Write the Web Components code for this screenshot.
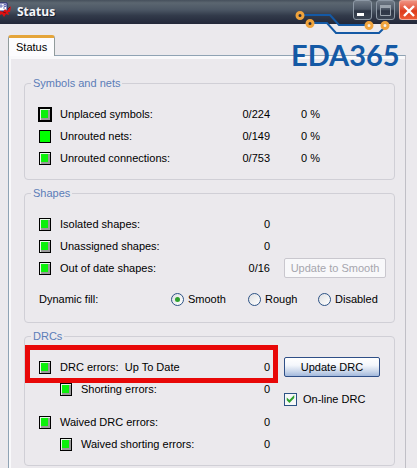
<!DOCTYPE html>
<html lang="en">
<head>
<meta charset="utf-8">
<meta name="viewport" content="width=device-width, initial-scale=1">
<title>Status</title>
<style>
  body {
    margin: 0;
    background: #ebe9ed;
    color: #000;
    font: 11px/14px "Liberation Sans", Arial, sans-serif;
  }
</style>
</head>
<body>
<status-window></status-window>

<script>
  class TitleBar extends HTMLElement {
    constructor() {
      super();
      this.attachShadow({ mode: 'open' });
    }

    connectedCallback() {
      this.shadowRoot.innerHTML = `
        <style>
          :host {
            display: flex;
            align-items: flex-start;
            height: 24px;
            background: linear-gradient(#46505c, #5b6670 12%, #4c5765 40%, #323a4a 65%, #222739);
          }
          .icon {
            width: 12px;
            height: 18px;
          }
          h1 {
            flex: 1;
            margin: 0;
            padding-left: 5px;
            color: #f4f5f8;
            font: bold 12px/24px "Open Sans", sans-serif;
            text-shadow: 1px 1px #1a2030;
          }
          .buttons {
            display: flex;
            gap: 4px;
          }
          button {
            box-sizing: border-box;
            width: 19px;
            height: 20px;
            padding: 0;
            border: 1px solid #8d98a5;
            border-radius: 3px;
            background: linear-gradient(#717b87, #4c5664 45%, #2e3646 55%, #3a4453);
          }
          button.close {
            width: 18px;
            border-color: #f0a898;
            border-right: 0;
            border-radius: 3px 0 0 3px;
            background: linear-gradient(#ef9080, #e4573c 45%, #dc3a1a 55%, #ee5a34);
          }
          button svg {
            display: block;
          }
        </style>
        <svg class="icon" viewBox="0 0 12 18" aria-hidden="true">
          <path d="M-1 3h8v8h-8z" fill="#fff" stroke="#23247c"/>
          <path d="M0 5h2v2H0zM4 4.500h2v2H4zM3 8h2" fill="none" stroke="#4a50a8" stroke-width=".8"/>
          <path d="M0 11l3 1 2-3 2 2 4-5-1 6-2 0 1 3-3-1-2 3-2-3-2 1z" fill="#e01010"/>
          <path d="M3 12l3 1M8 9l2-2" stroke="#7d0a14" fill="none"/>
        </svg>
        <h1><slot></slot></h1>
        <div class="buttons">
          <button type="button" aria-label="Minimize">
            <svg width="17" height="18"><path d="M3 12h7v3H3z" fill="#fff"/></svg>
          </button>
          <button type="button" aria-label="Maximize" disabled>
            <svg width="17" height="18"><path d="M3.500 5.500h10v9h-10z" fill="none" stroke="#9aa3ad"/><path d="M3 4h11v3H3z" fill="#9aa3ad"/></svg>
          </button>
          <button type="button" class="close" aria-label="Close">
            <svg width="17" height="18"><path d="M4 5l10 10M14 5l-10 10" stroke="#fff" stroke-width="2.4"/></svg>
          </button>
        </div>
      `;
    }
  }

  class BoardLogo extends HTMLElement {
    constructor() {
      super();
      this.attachShadow({ mode: 'open' });
    }

    connectedCallback() {
      this.shadowRoot.innerHTML = `
        <style>
          :host {
            display: block;
            width: 112px;
            color: #1459a5;
            pointer-events: none;
          }
          svg {
            display: block;
            margin-left: 4px;
          }
          .name {
            font: bold 29px/32px Lato, sans-serif;
            white-space: nowrap;
          }
        </style>
        <svg width="96" height="29" viewBox="0 0 96 29" aria-hidden="true">
          <g fill="none" stroke="#1459a5" stroke-width="2">
            <path d="M9 5h26l9 10h26"/>
            <path d="M19 13h13l9 10h43l6-6"/>
          </g>
          <g fill="#2b2d3a" stroke="#efa33c" stroke-width="3">
            <circle cx="5" cy="5.500" r="3"/>
            <circle cx="15" cy="13.500" r="3"/>
          </g>
          <g fill="#f3eee6" stroke="#efa33c" stroke-width="3">
            <circle cx="74" cy="15.500" r="3"/>
            <circle cx="90" cy="15.500" r="3"/>
          </g>
        </svg>
        <div class="name"><slot></slot></div>
      `;
    }
  }

  class TabPanel extends HTMLElement {
    constructor() {
      super();
      this.attachShadow({ mode: 'open' });
    }

    connectedCallback() {
      this.shadowRoot.innerHTML = `
        <style>
          :host {
            display: flex;
            flex-direction: column;
            align-items: flex-start;
          }
          button {
            position: relative;
            height: 21px;
            margin: 0 0 -1px;
            padding: 0 7px;
            border: 1px solid #919b9c;
            border-top: 3px solid #e5a53a;
            border-bottom: 0;
            border-radius: 3px 3px 0 0;
            background: #fcfcfe;
            color: inherit;
            font: inherit;
          }
          .page {
            flex: 1;
            align-self: stretch;
            box-sizing: border-box;
            padding: 20px 10px 0 15px;
            border: 1px solid #8fa3b4;
            border-right-color: #c0bfc6;
            border-bottom: 0;
            box-shadow: inset 2px 3px #f9f9fb;
          }
        </style>
        <button type="button" role="tab" id="tab" aria-selected="true">${this.getAttribute('label')}</button>
        <div class="page" role="tabpanel" aria-labelledby="tab"><slot></slot></div>
      `;
    }
  }

  class GroupBox extends HTMLElement {
    constructor() {
      super();
      this.attachShadow({ mode: 'open' });
    }

    connectedCallback() {
      this.shadowRoot.innerHTML = `
        <style>
          :host {
            display: block;
            margin-bottom: 6px;
          }
          fieldset {
            min-width: 0;
            margin: 0;
            padding: 13px 8px 10px 14px;
            border: 1px solid #d0cfd6;
            border-radius: 4px;
          }
          legend {
            margin-left: -8px;
            padding: 0 2px;
            color: #5b7db8;
          }
          .columns {
            display: grid;
            grid-template-columns: 1fr 102px;
            column-gap: 14px;
          }
        </style>
        <fieldset>
          <legend>${this.getAttribute('label')}</legend>
          <div class="columns">
            <div><slot></slot></div>
            <div><slot name="side"></slot></div>
          </div>
          <slot name="footer"></slot>
        </fieldset>
      `;
    }
  }

  class StatusRow extends HTMLElement {
    constructor() {
      super();
      this.attachShadow({ mode: 'open' });
    }

    connectedCallback() {
      this.shadowRoot.innerHTML = `
        <style>
          :host {
            display: grid;
            position: relative;
            grid-template-columns: 12px 1fr auto;
            column-gap: 9px;
            align-items: center;
            height: 22px;
          }
          :host([nested]) {
            padding-left: 21px;
          }
          :host([spaced]) {
            margin-top: 11px;
          }
          button {
            width: 12px;
            height: 13px;
            padding: 0;
            border: 1px solid #000;
            background: #0cf00c;
            box-shadow: inset 1px 1px #e8f8e8, inset -2px -2px #9a9a9a;
          }
          :host([flat]) button {
            background: #00ff00;
            box-shadow: none;
          }
          :host([focused]) button {
            outline: 1px solid #000;
          }
          label {
            white-space: pre;
          }
          /* red frame drawn over the row and its neighbours */
          :host([marked])::after {
            content: "";
            position: absolute;
            z-index: 1;
            inset: -11px -8px -5px -14px;
            border: 5px solid #e80808;
            pointer-events: none;
          }
        </style>
        <button type="button" id="swatch"></button>
        <label for="swatch"><slot></slot></label>
        <output for="swatch">${this.getAttribute('value')}</output>
      `;
    }
  }

  class PercentValue extends HTMLElement {
    constructor() {
      super();
      this.attachShadow({ mode: 'open' });
    }

    connectedCallback() {
      this.shadowRoot.innerHTML = `
        <style>
          :host {
            display: block;
            padding-left: 17px;
            line-height: 22px;
          }
        </style>
        <slot></slot>
      `;
    }
  }

  class PushButton extends HTMLElement {
    constructor() {
      super();
      this.attachShadow({ mode: 'open' });
    }

    connectedCallback() {
      const disabled = this.hasAttribute('disabled') ? 'disabled' : '';
      this.shadowRoot.innerHTML = `
        <style>
          :host {
            display: block;
          }
          :host([disabled]) {
            margin-top: 44px;
          }
          button {
            width: 96px;
            height: 20px;
            margin: 1px 0;
            padding: 0;
            border: 1px solid #2f4f87;
            border-radius: 2px;
            background: linear-gradient(#fff, #f4f7fc 40%, #c9d6ea 75%, #a3b9dc);
            color: #000;
            font: inherit;
            white-space: nowrap;
          }
          button:disabled {
            width: 100%;
            border-color: #c9c7ce;
            background: #f8f8fa;
            color: #a6a6ae;
          }
        </style>
        <button type="button" ${disabled}><slot></slot></button>
      `;
    }
  }

  class CheckOption extends HTMLElement {
    constructor() {
      super();
      this.attachShadow({ mode: 'open' });
    }

    connectedCallback() {
      this.shadowRoot.innerHTML = `
        <style>
          :host {
            display: block;
            margin-top: 10px;
          }
          label {
            display: flex;
            align-items: center;
            gap: 6px;
            height: 22px;
            white-space: nowrap;
          }
          input {
            appearance: none;
            display: grid;
            box-sizing: border-box;
            width: 13px;
            height: 13px;
            margin: 0;
            border: 1px solid #2c5285;
            background: #f6f8f8;
          }
          input:checked::before {
            content: "";
            background: #2ea12e;
            clip-path: polygon(16% 36%, 40% 58%, 84% 14%, 84% 42%, 40% 86%, 16% 62%);
          }
        </style>
        <label><input type="checkbox" checked><slot></slot></label>
      `;
    }
  }

  class RadioOptions extends HTMLElement {
    constructor() {
      super();
      this.attachShadow({ mode: 'open' });
    }

    connectedCallback() {
      const selected = this.getAttribute('selected');
      const options = this.getAttribute('options').split(',');
      this.shadowRoot.innerHTML = `
        <style>
          :host {
            display: block;
            margin: 9px 0 2px;
          }
          .row {
            display: grid;
            grid-template-columns: 1fr 77px 70px 68px;
            align-items: center;
            height: 22px;
          }
          label {
            display: flex;
            align-items: center;
            gap: 4px;
          }
          input {
            appearance: none;
            display: grid;
            place-items: center;
            box-sizing: border-box;
            width: 13px;
            height: 13px;
            margin: 0;
            border: 1px solid #2c5285;
            border-radius: 50%;
            background: linear-gradient(135deg, #dfe0e2, #fff);
          }
          input:checked::before {
            content: "";
            width: 5px;
            height: 5px;
            border-radius: 50%;
            background: #2ea12e;
          }
        </style>
        <div class="row" role="radiogroup" aria-labelledby="caption">
          <span id="caption">${this.getAttribute('label')}</span>
          ${options.map(o => `
            <label><input type="radio" name="fill" ${o === selected ? 'checked' : ''}>${o}</label>
          `).join('')}
        </div>
      `;
    }
  }

  class StatusWindow extends HTMLElement {
    constructor() {
      super();
      this.attachShadow({ mode: 'open' });
    }

    connectedCallback() {
      this.shadowRoot.innerHTML = `
        <style>
          :host {
            display: flex;
            flex-direction: column;
            position: relative;
            min-height: 100vh;
          }
          tab-panel {
            flex: 1;
            margin: 11px 11px 0 8px;
          }
          group-box:last-child {
            margin-bottom: 0;
          }
          board-logo {
            position: absolute;
            top: 10px;
            right: 14px;
          }
        </style>
        <title-bar>Status</title-bar>
        <tab-panel label="Status">
          <group-box label="Symbols and nets">
            <status-row value="0/224" focused>Unplaced symbols:</status-row>
            <status-row value="0/149" flat>Unrouted nets:</status-row>
            <status-row value="0/753">Unrouted connections:</status-row>
            <percent-value slot="side">0 %</percent-value>
            <percent-value slot="side">0 %</percent-value>
            <percent-value slot="side">0 %</percent-value>
          </group-box>
          <group-box label="Shapes">
            <status-row value="0">Isolated shapes:</status-row>
            <status-row value="0">Unassigned shapes:</status-row>
            <status-row value="0/16">Out of date shapes:</status-row>
            <push-button slot="side" disabled>Update to Smooth</push-button>
            <radio-options slot="footer" label="Dynamic fill:" options="Smooth,Rough,Disabled" selected="Smooth"></radio-options>
          </group-box>
          <group-box label="DRCs">
            <status-row value="0" marked>DRC errors:  Up To Date</status-row>
            <status-row value="0" nested>Shorting errors:</status-row>
            <status-row value="0" spaced>Waived DRC errors:</status-row>
            <status-row value="0" nested>Waived shorting errors:</status-row>
            <push-button slot="side">Update DRC</push-button>
            <check-option slot="side">On-line DRC</check-option>
          </group-box>
        </tab-panel>
        <board-logo>EDA365</board-logo>
      `;
    }
  }

  customElements.define('title-bar', TitleBar);
  customElements.define('board-logo', BoardLogo);
  customElements.define('tab-panel', TabPanel);
  customElements.define('group-box', GroupBox);
  customElements.define('status-row', StatusRow);
  customElements.define('percent-value', PercentValue);
  customElements.define('push-button', PushButton);
  customElements.define('check-option', CheckOption);
  customElements.define('radio-options', RadioOptions);
  customElements.define('status-window', StatusWindow);
</script>
</body>
</html>
